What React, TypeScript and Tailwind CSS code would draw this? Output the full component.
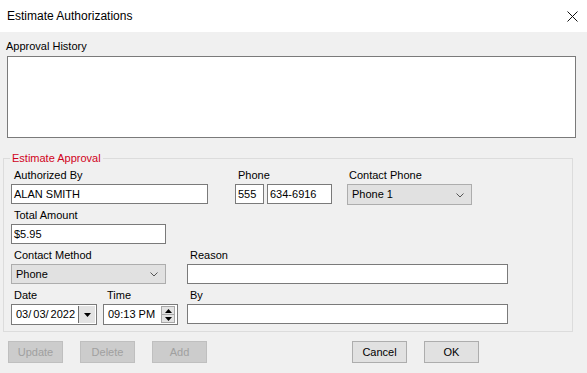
import React from "react";

const font = { fontFamily: '"Liberation Sans", Arial, sans-serif' };

function Label({ children }: { children: React.ReactNode }) {
  return <div className="h-[16px] pt-[1px] pl-[3px] leading-[13px] text-[11px] text-black whitespace-nowrap">{children}</div>;
}

function TextBox({ value, className }: { value?: string; className: string }) {
  return (
    <div className={`h-[20px] bg-white border border-[#7a7a7a] flex items-center pl-[2px] text-[11px] text-black whitespace-nowrap overflow-hidden ${className}`}>
      {value}
    </div>
  );
}

function Combo({ value, className }: { value: string; className: string }) {
  return (
    <div className={`bg-[#e1e1e1] border border-[#adadad] flex items-center justify-between pl-[4px] pr-[7px] text-[11px] text-black ${className}`}>
      <span>{value}</span>
      <svg width="8" height="5" viewBox="0 0 8 5" className="mt-[1px]">
        <path d="M0.5 0.5 L4 4 L7.5 0.5" fill="none" stroke="#555" strokeWidth="1" />
      </svg>
    </div>
  );
}

function Btn({ children, disabled, className }: { children: React.ReactNode; disabled?: boolean; className?: string }) {
  return (
    <div
      className={`w-[55px] h-[22px] flex items-center justify-center text-[11px] border ${
        disabled ? "bg-[#cccccc] border-[#bfbfbf] text-[#a0a0a0]" : "bg-[#e1e1e1] border-[#adadad] text-black"
      } ${className ?? ""}`}
    >
      {children}
    </div>
  );
}

export default function App() {
  return (
    <div className="w-[587px] h-[373px] bg-[#f0f0f0] overflow-hidden flex flex-col" style={font}>
      {/* Title bar */}
      <div className="h-[32px] bg-white flex items-center justify-between pl-[7px] pr-[9px] shrink-0">
        <span className="text-[12px] text-black">Estimate Authorizations</span>
        <svg width="11" height="11" viewBox="0 0 11 11">
          <path d="M0.5 0.5 L10.5 10.5 M10.5 0.5 L0.5 10.5" stroke="#111" strokeWidth="1" />
        </svg>
      </div>

      {/* Body */}
      <div className="flex flex-col">
        <div className="mt-[8px] ml-[6px] h-[13px] leading-[13px] text-[11px] text-black">Approval History</div>
        <div className="mt-[3px] ml-[7px] w-[569px] h-[82px] bg-white border border-[#7a7a7a]" />

        {/* Group box */}
        <div className="relative mt-[20px] ml-[3px] w-[570px] h-[174px] border border-[#dcdcdc] pt-[9px] pl-[7px] flex flex-col">
          <div className="absolute -top-[7px] left-[6px] bg-[#f0f0f0] px-[2px] leading-[13px] text-[11px] text-[#d0021b]">
            Estimate Approval
          </div>

          {/* Row 1 */}
          <div className="flex h-[40px]">
            <div className="w-[197px] flex flex-col">
              <Label>Authorized By</Label>
              <TextBox value="ALAN SMITH" className="w-[197px]" />
            </div>
            <div className="ml-[27px] flex flex-col">
              <Label>Phone</Label>
              <div className="flex gap-[3px]">
                <TextBox value="555" className="w-[29px]" />
                <TextBox value="634-6916" className="w-[65px]" />
              </div>
            </div>
            <div className="ml-[15px] flex flex-col">
              <div className="-ml-[1px]"><Label>Contact Phone</Label></div>
              <Combo value="Phone 1" className="w-[125px] h-[21px]" />
            </div>
          </div>

          {/* Row 2 */}
          <div className="flex h-[40px]">
            <div className="flex flex-col">
              <Label>Total Amount</Label>
              <TextBox value="$5.95" className="w-[155px]" />
            </div>
          </div>

          {/* Row 3 */}
          <div className="flex h-[40px]">
            <div className="flex flex-col">
              <Label>Contact Method</Label>
              <Combo value="Phone" className="w-[155px] h-[20px]" />
            </div>
            <div className="ml-[21px] flex flex-col">
              <Label>Reason</Label>
              <TextBox className="w-[321px]" />
            </div>
          </div>

          {/* Row 4 */}
          <div className="flex h-[40px]">
            <div className="flex flex-col">
              <Label>Date</Label>
              <div className="w-[86px] h-[21px] bg-white border border-[#7a7a7a] flex items-center text-[11px] text-black">
                <span className="pl-[4px] flex-1 whitespace-nowrap">
                  <span className="mr-[2px]">03/</span>
                  <span className="mr-[2px]">03/</span>
                  <span>2022</span>
                </span>
                <div className="w-[1px] h-[17px] bg-[#6d6d6d]" />
                <div className="w-[16px] h-[17px] bg-[#e3e3e3] flex items-center justify-center mr-[1px]">
                  <svg width="7" height="4" viewBox="0 0 7 4">
                    <path d="M0 0 L7 0 L3.5 4 Z" fill="#000" />
                  </svg>
                </div>
              </div>
            </div>
            <div className="ml-[6px] flex flex-col">
              <div className="ml-[1px]"><Label>Time</Label></div>
              <div className="w-[75px] h-[21px] bg-white border border-[#7a7a7a] flex items-center text-[11px] text-black">
                <span className="pl-[4px] flex-1">09:13 PM</span>
                <div className="w-[14px] h-[17px] border border-[#a8a8a8] bg-[#e3e3e3] flex flex-col mr-[2px]">
                  <div className="flex-1 flex items-center justify-center border-b border-[#a8a8a8]">
                    <svg width="7" height="4" viewBox="0 0 7 4">
                      <path d="M0 4 L7 4 L3.5 0 Z" fill="#000" />
                    </svg>
                  </div>
                  <div className="flex-1 flex items-center justify-center">
                    <svg width="7" height="4" viewBox="0 0 7 4">
                      <path d="M0 0 L7 0 L3.5 4 Z" fill="#000" />
                    </svg>
                  </div>
                </div>
              </div>
            </div>
            <div className="ml-[9px] flex flex-col">
              <Label>By</Label>
              <TextBox className="w-[321px]" />
            </div>
          </div>
        </div>

        {/* Buttons */}
        <div className="mt-[9px] ml-[8px] flex">
          <Btn disabled>Update</Btn>
          <Btn disabled className="ml-[17px]">Delete</Btn>
          <Btn disabled className="ml-[17px]">Add</Btn>
          <Btn className="ml-[145px]">Cancel</Btn>
          <Btn className="ml-[17px]">OK</Btn>
        </div>
      </div>
    </div>
  );
}
